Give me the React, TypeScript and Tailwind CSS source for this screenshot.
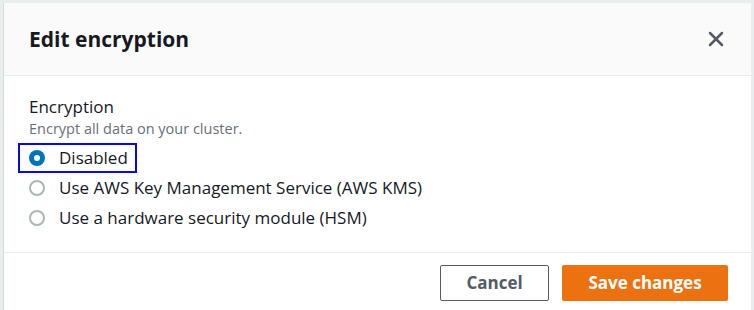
import { X } from "lucide-react";

const OPTIONS = [
  { id: "disabled", label: "Disabled" },
  { id: "kms", label: "Use AWS Key Management Service (AWS KMS)" },
  { id: "hsm", label: "Use a hardware security module (HSM)" },
];

function Radio({ checked }: { checked: boolean }) {
  if (checked) {
    return (
      <span className="flex h-4 w-4 shrink-0 items-center justify-center rounded-full bg-[#0073bb]">
        <span className="h-[6px] w-[6px] rounded-full bg-white" />
      </span>
    );
  }
  return <span className="h-4 w-4 shrink-0 rounded-full border-2 border-[#aab7b8] bg-white" />;
}

export default function App() {
  const selected = "disabled";
  return (
    <div
      className="h-[310px] w-[754px] overflow-hidden bg-[#eaeded] pt-[3px] pl-[3px] pr-[3px]"
      style={{ fontFamily: '"Open Sans", "Noto Sans", Arial, sans-serif' }}
    >
      <div className="h-full border-l border-[#d5dbdb] bg-white">
        <div className="flex h-[73px] items-center justify-between border-b border-[#eaeded] bg-[#fafafa] pl-[25px] pr-[23px]">
          <h2 className="text-[21px] font-bold leading-6 text-[#16191f]">Edit encryption</h2>
          <X size={24} strokeWidth={2.5} className="text-[#545b64]" />
        </div>

        <div className="border-b border-[#eaeded] px-[25px] pt-[20px] pb-[19px]">
          <div className="text-[17px] leading-[22px] text-[#16191f]">Encryption</div>
          <div className="text-[14.5px] leading-[22px] text-[#687078]">Encrypt all data on your cluster.</div>
          <div className="mt-[3px] flex flex-col">
            {OPTIONS.map((o) => (
              <label
                key={o.id}
                className={
                  o.id === selected
                    ? "-ml-[11px] flex h-[30px] w-fit items-center gap-[14px] border-2 border-[#0a0ae0] pl-[9px] pr-[7px] text-[17px] text-[#16191f]"
                    : "flex h-[30px] items-center gap-[14px] text-[17px] text-[#16191f]"
                }
              >
                <Radio checked={o.id === selected} />
                <span>{o.label}</span>
              </label>
            ))}
          </div>
        </div>

        <div className="flex justify-end gap-[13px] pt-[12px] pr-[23px]">
          <button
            type="button"
            className="h-[36px] w-[109px] rounded-[2px] border border-[#545b64] bg-white text-[17px] font-bold text-[#545b64]"
          >
            Cancel
          </button>
          <button
            type="button"
            className="h-[36px] w-[166px] rounded-[2px] bg-[#ec7211] text-[17px] font-bold text-white"
          >
            Save changes
          </button>
        </div>
      </div>
    </div>
  );
}
